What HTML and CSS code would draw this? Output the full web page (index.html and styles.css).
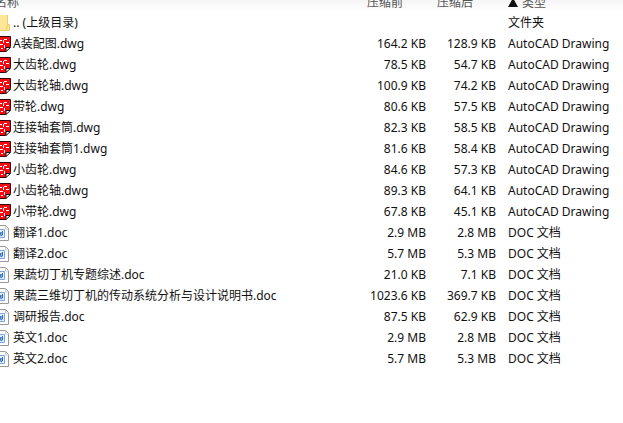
FILE: index.html
```
<!DOCTYPE html>
<html lang="zh-CN">
<head>
    <meta charset="UTF-8">
    <meta name="viewport" content="width=device-width, initial-scale=1.0">
    <title>压缩文件列表</title>
    <link rel="stylesheet" href="styles.css">
</head>
<body>

<!-- Iconos -->
<svg class="sprite" width="0" height="0" aria-hidden="true">
    <symbol id="folder" viewBox="0 0 16 16">
        <path d="M0 0h13v9h1v6.500H0z" fill="#fde697"/>
        <path d="M12.500 0v10l-1 5M12 9.500h2.500v6H0" fill="none" stroke="#edce6c"/>
    </symbol>
    <symbol id="dwg" viewBox="0 0 16 16">
        <path d="M0 .5h15.500v10l-5 5H0z" fill="#f40a10" stroke="#3a0508"/>
        <path d="M11 15.500V11.500h4.500z" fill="#fff" stroke="#111"/>
        <path d="M5 4.500h2M9 3.500h3M8.500 4v3M11 6.500h3M5 8.500h3M9.500 9v3M6 12.500h2" fill="none" stroke="#fff"/>
    </symbol>
    <symbol id="doc" viewBox="0 0 16 16">
        <path d="M0 .500h10.500l3 3v12H0z" fill="#fff" stroke="#999"/>
        <path d="M10.500 1v3h3" fill="none" stroke="#ccc"/>
        <path d="M1 4.500h8.500v8H1z" fill="#e6effc" stroke="#7ba5e6"/>
        <path d="M3 6l1.500 5 1.500-4v4l1.500-1V6" fill="none" stroke="#2f6cc6"/>
    </symbol>
</svg>

<table class="files">
    <colgroup>
        <col>
        <col class="col-size">
        <col class="col-size">
        <col class="col-type">
    </colgroup>
    <thead>
        <tr>
            <th><button type="button">名称</button></th>
            <th><button type="button">压缩前</button></th>
            <th><button type="button">压缩后</button></th>
            <th aria-sort="ascending"><button type="button">
                <svg class="arrow" viewBox="0 0 10 10" aria-hidden="true"><path d="M5 0l5 9H0z"/></svg>类型</button></th>
        </tr>
    </thead>
    <tbody>
        <tr><td><svg class="icon"><use href="#folder"/></svg>.. (上级目录)</td><td></td><td></td><td>文件夹</td></tr>
        <tr><td><svg class="icon"><use href="#dwg"/></svg>A装配图.dwg</td><td>164.2 KB</td><td>128.9 KB</td><td>AutoCAD Drawing</td></tr>
        <tr><td><svg class="icon"><use href="#dwg"/></svg>大齿轮.dwg</td><td>78.5 KB</td><td>54.7 KB</td><td>AutoCAD Drawing</td></tr>
        <tr><td><svg class="icon"><use href="#dwg"/></svg>大齿轮轴.dwg</td><td>100.9 KB</td><td>74.2 KB</td><td>AutoCAD Drawing</td></tr>
        <tr><td><svg class="icon"><use href="#dwg"/></svg>带轮.dwg</td><td>80.6 KB</td><td>57.5 KB</td><td>AutoCAD Drawing</td></tr>
        <tr><td><svg class="icon"><use href="#dwg"/></svg>连接轴套筒.dwg</td><td>82.3 KB</td><td>58.5 KB</td><td>AutoCAD Drawing</td></tr>
        <tr><td><svg class="icon"><use href="#dwg"/></svg>连接轴套筒1.dwg</td><td>81.6 KB</td><td>58.4 KB</td><td>AutoCAD Drawing</td></tr>
        <tr><td><svg class="icon"><use href="#dwg"/></svg>小齿轮.dwg</td><td>84.6 KB</td><td>57.3 KB</td><td>AutoCAD Drawing</td></tr>
        <tr><td><svg class="icon"><use href="#dwg"/></svg>小齿轮轴.dwg</td><td>89.3 KB</td><td>64.1 KB</td><td>AutoCAD Drawing</td></tr>
        <tr><td><svg class="icon"><use href="#dwg"/></svg>小带轮.dwg</td><td>67.8 KB</td><td>45.1 KB</td><td>AutoCAD Drawing</td></tr>
        <tr><td><svg class="icon"><use href="#doc"/></svg>翻译1.doc</td><td>2.9 MB</td><td>2.8 MB</td><td>DOC 文档</td></tr>
        <tr><td><svg class="icon"><use href="#doc"/></svg>翻译2.doc</td><td>5.7 MB</td><td>5.3 MB</td><td>DOC 文档</td></tr>
        <tr><td><svg class="icon"><use href="#doc"/></svg>果蔬切丁机专题综述.doc</td><td>21.0 KB</td><td>7.1 KB</td><td>DOC 文档</td></tr>
        <tr><td><svg class="icon"><use href="#doc"/></svg>果蔬三维切丁机的传动系统分析与设计说明书.doc</td><td>1023.6 KB</td><td>369.7 KB</td><td>DOC 文档</td></tr>
        <tr><td><svg class="icon"><use href="#doc"/></svg>调研报告.doc</td><td>87.5 KB</td><td>62.9 KB</td><td>DOC 文档</td></tr>
        <tr><td><svg class="icon"><use href="#doc"/></svg>英文1.doc</td><td>2.9 MB</td><td>2.8 MB</td><td>DOC 文档</td></tr>
        <tr><td><svg class="icon"><use href="#doc"/></svg>英文2.doc</td><td>5.7 MB</td><td>5.3 MB</td><td>DOC 文档</td></tr>
    </tbody>
</table>

</body>
</html>
```
FILE: styles.css
```
* {
    box-sizing: border-box;
}

body {
    margin: 0;
    background-color: #fff;
    color: #111;
    font-family: "Noto Sans", "Noto Sans CJK SC", sans-serif;
    font-size: 12px;
    line-height: 21px;
    overflow: hidden;
}

.sprite {
    display: block;
}

/* La lista empieza un poco fuera de la ventana */
.files {
    width: calc(100% + 5px);
    margin: -9px 0 0 -5px;
    table-layout: fixed;
    border-collapse: collapse;
}

.col-size {
    width: 70px;
}

.col-type {
    width: 121px;
}

.files th,
.files td {
    height: 21px;
    padding: 0 6px;
    text-align: left;
    white-space: nowrap;
}

.files thead {
    background: linear-gradient(#f5f5f5 40%, #fff);
}

.files th {
    padding: 0 5px;
    font-weight: normal;
}

.files th:first-child,
.files td:first-child {
    padding-left: 0;
}

.files th:last-child {
    padding-left: 6px;
}

.files td:nth-child(2),
.files td:nth-child(3) {
    text-align: right;
}

.files button {
    display: block;
    padding: 2px 0 0;
    border: 0;
    background: none;
    color: #555;
    font: inherit;
    line-height: 19px;
}

.icon {
    width: 16px;
    height: 16px;
    margin-right: 2px;
    vertical-align: -4px;
}

.arrow {
    width: 10px;
    height: 10px;
    margin-right: 4px;
    fill: #111;
    vertical-align: -1px;
}
```
